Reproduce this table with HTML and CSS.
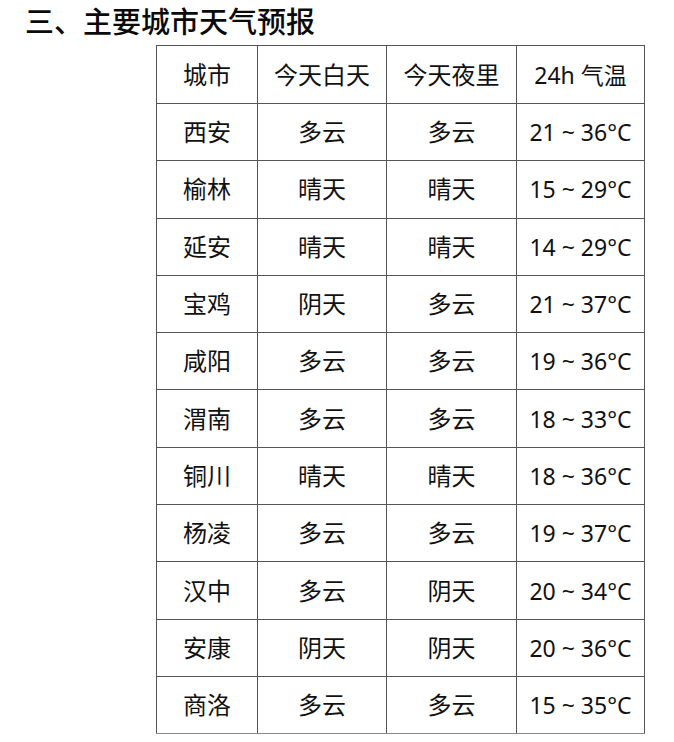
FILE: index.html
```html
<!DOCTYPE html>
<html lang="zh-CN">
<head>
<meta charset="utf-8">
<link rel="stylesheet" href="styles.css">
</head>
<body>
<h2 class="title">三、主要城市天气预报</h2>
<table class="weather">
<colgroup><col class="c1"><col class="c2"><col class="c3"><col class="c4"></colgroup>
<tr class="head"><td>城市</td><td>今天白天</td><td>今天夜里</td><td>24h 气温</td></tr>
<tr><td>西安</td><td>多云</td><td>多云</td><td>21 ~ 36°C</td></tr>
<tr><td>榆林</td><td>晴天</td><td>晴天</td><td>15 ~ 29°C</td></tr>
<tr><td>延安</td><td>晴天</td><td>晴天</td><td>14 ~ 29°C</td></tr>
<tr><td>宝鸡</td><td>阴天</td><td>多云</td><td>21 ~ 37°C</td></tr>
<tr><td>咸阳</td><td>多云</td><td>多云</td><td>19 ~ 36°C</td></tr>
<tr><td>渭南</td><td>多云</td><td>多云</td><td>18 ~ 33°C</td></tr>
<tr><td>铜川</td><td>晴天</td><td>晴天</td><td>18 ~ 36°C</td></tr>
<tr><td>杨凌</td><td>多云</td><td>多云</td><td>19 ~ 37°C</td></tr>
<tr><td>汉中</td><td>多云</td><td>阴天</td><td>20 ~ 34°C</td></tr>
<tr><td>安康</td><td>阴天</td><td>阴天</td><td>20 ~ 36°C</td></tr>
<tr><td>商洛</td><td>多云</td><td>多云</td><td>15 ~ 35°C</td></tr>
</table>
</body>
</html>
```
FILE: styles.css
```css
html, body {
  margin: 0;
  padding: 0;
  background: #fff;
}
body {
  font-family: "Noto Sans", "Noto Sans CJK SC", sans-serif;
  color: #111;
}
.title {
  margin: 0;
  padding: 1px 0 0 25px;
  font-family: "Noto Sans CJK SC", sans-serif;
  font-size: 29px;
  font-weight: 500;
  line-height: 38px;
  height: 42px;
  box-sizing: border-box;
  color: #0a0a0a;
}
.weather {
  margin-left: 156px;
  margin-top: 3px;
  border-collapse: collapse;
  table-layout: fixed;
  width: 488px;
}
.c1 { width: 101px; }
.c2 { width: 129px; }
.c3 { width: 130px; }
.c4 { width: 128px; }
.weather td {
  border: 1px solid #555;
  height: 56.3px;
  padding: 0;
  text-align: center;
  vertical-align: middle;
  font-size: 24px;
  line-height: 30px;
}
.weather .head td {
  height: 57px;
}
.weather td:last-child {
  font-size: 23px;
}
.weather tr:last-child td {
  border-bottom-color: #888;
}
```
